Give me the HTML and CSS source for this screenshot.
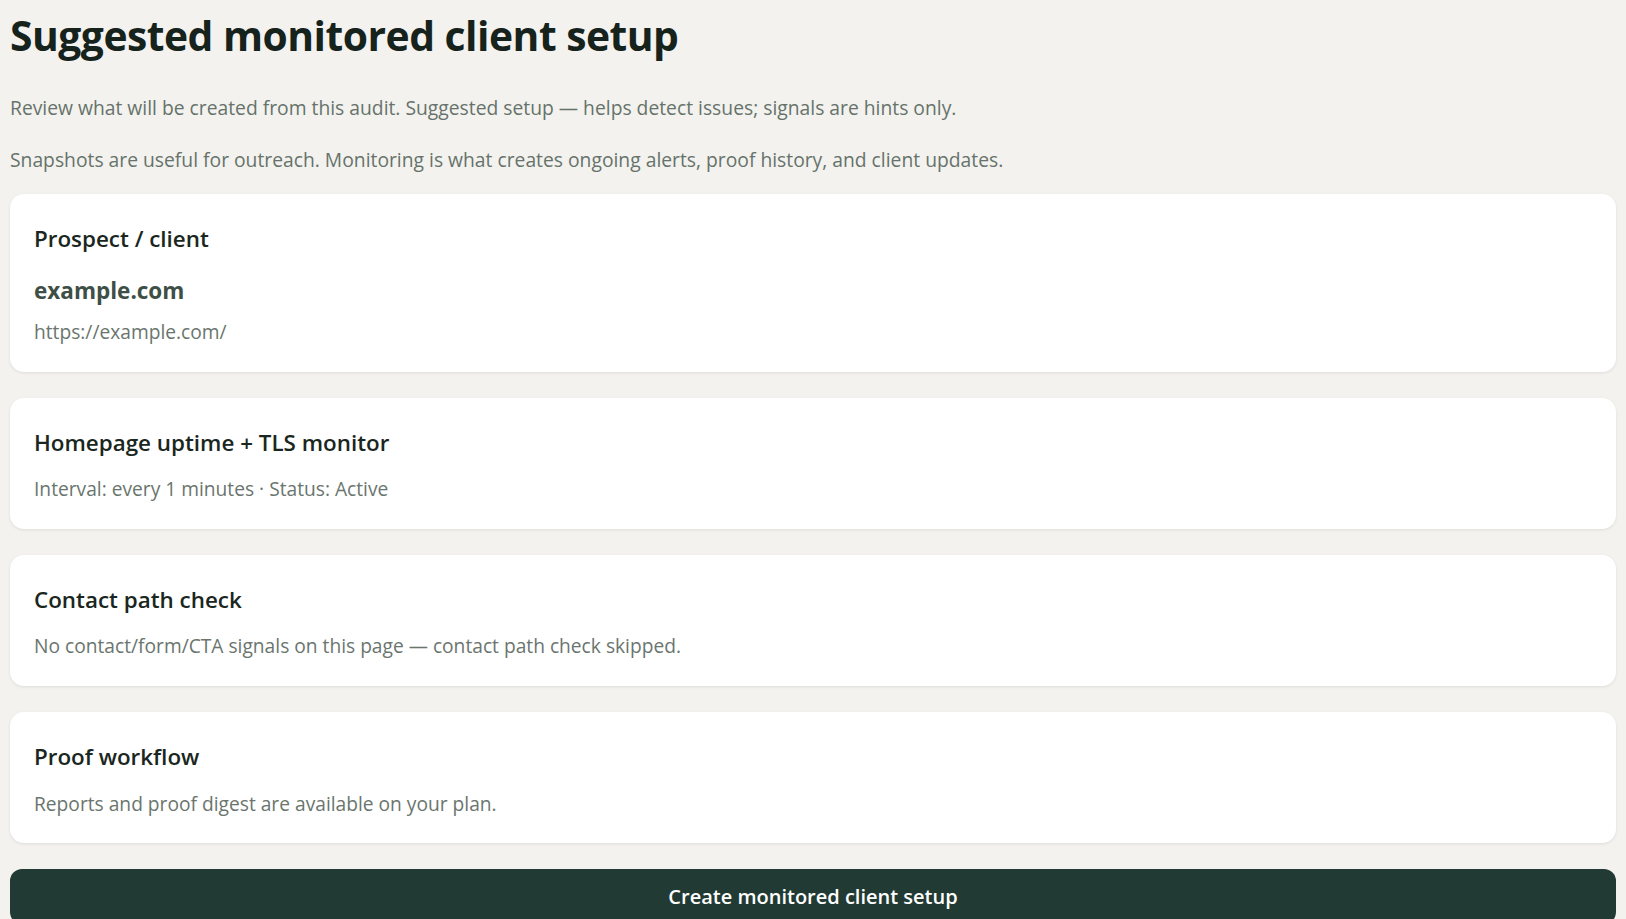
FILE: index.html
```html
<!DOCTYPE html>
<html lang="en">

<head>
    <meta charset="UTF-8">
    <meta name="viewport" content="width=device-width, initial-scale=1.0">
    <title>Suggested monitored client setup</title>
    <link rel="stylesheet" href="styles.css">
</head>

<body>
    <main class="page">
        <h1 class="page-title">Suggested monitored client setup</h1>
        <p class="lead">Review what will be created from this audit. Suggested setup — helps detect issues; signals are hints only.</p>
        <p class="lead lead-last">Snapshots are useful for outreach. Monitoring is what creates ongoing alerts, proof history, and client updates.</p>

        <section class="card">
            <h3 class="card-title">Prospect / client</h3>
            <div class="client-name">example.com</div>
            <div class="muted">https://example.com/</div>
        </section>

        <section class="card">
            <h3 class="card-title">Homepage uptime + TLS monitor</h3>
            <div class="muted">Interval: every 1 minutes · Status: Active</div>
        </section>

        <section class="card">
            <h3 class="card-title">Contact path check</h3>
            <div class="muted">No contact/form/CTA signals on this page — contact path check skipped.</div>
        </section>

        <section class="card">
            <h3 class="card-title">Proof workflow</h3>
            <div class="muted">Reports and proof digest are available on your plan.</div>
        </section>

        <button class="primary-btn" type="button">Create monitored client setup</button>
    </main>
</body>

</html>
```

FILE: styles.css
```css
body {
    font-family: "Open Sans", "Noto Sans", sans-serif;
    margin: 0;
    padding: 0;
    background-color: #f3f2ee;
    color: #17231e;
}

.page {
    padding: 0 10px;
}

.page-title {
    font-size: 40.8px;
    font-weight: 700;
    line-height: 1.2;
    margin: 11px 0 33px;
    letter-spacing: -0.5px;
    color: #16221c;
}

.lead {
    font-size: 19.3px;
    line-height: 1.6;
    color: #66726b;
    margin: 0 0 21px;
}

.lead-last {
    margin-bottom: 18px;
}

.card {
    background: white;
    border-radius: 14px;
    padding: 29px 24px 25px;
    margin-bottom: 26px;
    box-shadow: 0 1px 3px rgba(30, 40, 35, 0.1);
}

.card-title {
    font-size: 22.4px;
    font-weight: 600;
    line-height: 1.4;
    margin: 0 0 17px;
    color: #1a2620;
}

.client-name {
    font-size: 22.5px;
    font-weight: 700;
    color: #3e4f46;
    margin: 21px 0 12px;
}

.muted {
    font-size: 19.2px;
    line-height: 1.5;
    color: #6a756e;
}

.primary-btn {
    display: block;
    width: 100%;
    background: #213b34;
    color: white;
    border: none;
    border-radius: 12px;
    padding: 14px 20px;
    font-family: inherit;
    font-size: 20px;
    font-weight: 600;
    cursor: pointer;
}
```
